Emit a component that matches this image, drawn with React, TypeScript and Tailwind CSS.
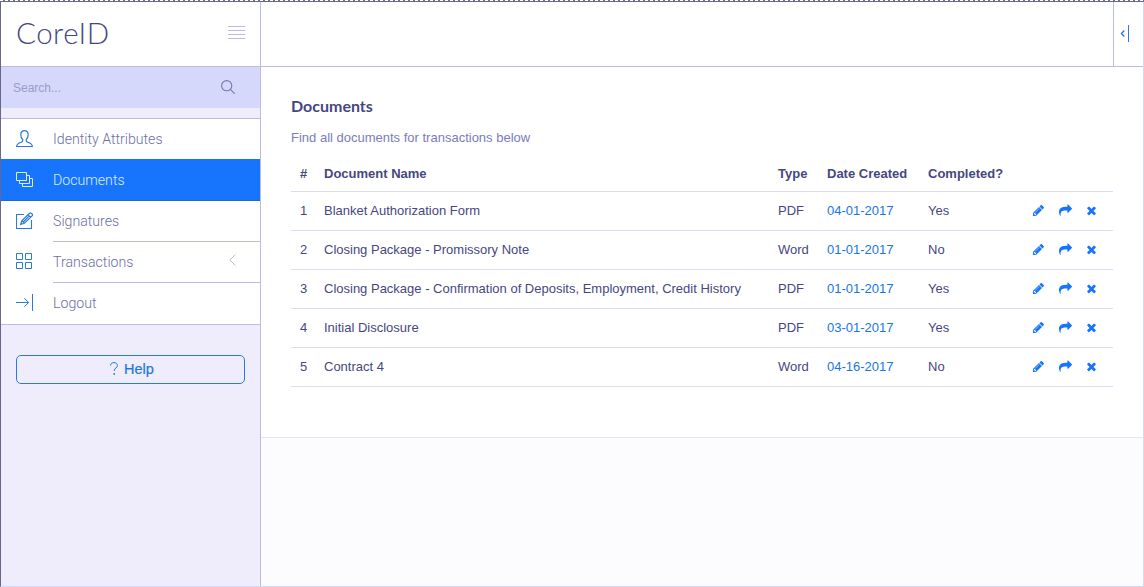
import React from "react";

type Doc = { id: number; name: string; type: string; date: string; completed: string };

const docs: Doc[] = [
  { id: 1, name: "Blanket Authorization Form", type: "PDF", date: "04-01-2017", completed: "Yes" },
  { id: 2, name: "Closing Package - Promissory Note", type: "Word", date: "01-01-2017", completed: "No" },
  { id: 3, name: "Closing Package - Confirmation of Deposits, Employment, Credit History", type: "PDF", date: "01-01-2017", completed: "Yes" },
  { id: 4, name: "Initial Disclosure", type: "PDF", date: "03-01-2017", completed: "Yes" },
  { id: 5, name: "Contract 4", type: "Word", date: "04-16-2017", completed: "No" },
];

const columns = "grid grid-cols-[33px_454px_49px_101px_104px_27px_26px_28px] items-center";

function LineIcon({ children }: { children: React.ReactNode }) {
  return (
    <svg width="18" height="18" viewBox="0 0 18 18" fill="none" stroke="currentColor" strokeWidth="1">
      {children}
    </svg>
  );
}

const UserIcon = () => (
  <LineIcon>
    <path strokeWidth="1.200" d="M8.500 .7C6.300.7 4.800 2.200 4.800 4.700c0 2 .8 3.800 1.900 4.800v1.200c0 .8-.5 1.100-1.300 1.400C2.900 12.900.9 13.400.6 16.500h15.800c-.3-3.100-2.300-3.600-4.800-4.400-.8-.3-1.300-.6-1.300-1.400V9.500c1.100-1 1.900-2.800 1.900-4.800C12.200 2.200 10.700.7 8.500.7z" />
  </LineIcon>
);
const AlbumsIcon = () => (
  <LineIcon>
    <path d="M.5 1.500h10v8H.5zM3.500 9.500v3h10v-8h-3M6.500 12.500v3h10v-8h-3" />
  </LineIcon>
);
const ComposeIcon = () => (
  <LineIcon>
    <path strokeWidth="1.100" d="M8 3.500H.5v14h15V9" />
    <path strokeWidth="1.200" d="M4.700 13.300l1.100-3.600L13.500 2.200c.5-.5 1.200-.5 1.800 0l.8.800c.6.600.6 1.200 0 1.800L8.400 12.300zM5.800 9.700l2.600 2.600M12 3.700l2.600 2.600M7.200 11l6.200-6.100" />
  </LineIcon>
);
const GridIcon = () => (
  <LineIcon>
    <path d="M.5 1.500h6v6h-6zM9.500 1.500h6v6h-6zM.5 10.500h6v6h-6zM9.500 10.500h6v6h-6z" />
  </LineIcon>
);
const LogoutIcon = () => (
  <LineIcon>
    <path d="M0 9.500h12.500M8.300 5.200l4.300 4.300-4.300 4.300M16.500 1v17" />
  </LineIcon>
);

function GlyphIcon({ d }: { d: string }) {
  return (
    <svg width="13" height="13" viewBox="0 0 1792 1792" fill="currentColor">
      <path d={d} />
    </svg>
  );
}

const PENCIL =
  "M491 1536l91-91-235-235-91 91v107h128v128h107zm523-928q0-22-22-22-10 0-17 7l-542 542q-7 7-7 17 0 22 22 22 10 0 17-7l542-542q7-7 7-17zm-54-192l416 416-832 832h-416v-416zm683 96q0 53-37 90l-166 166-416-416 166-165q36-38 90-38 53 0 91 38l235 234q37 39 37 91z";
const SHARE =
  "M1792 640q0 26-19 45l-512 512q-19 19-45 19t-45-19-19-45v-256h-224q-98 0-175.500 6t-154 21.500-133 42.500-105.500 69.500-80 101-48.500 138.500-17.500 181q0 55 5 123 0 6 2.500 23.500t2.500 26.500q0 15-8.500 25t-23.500 10q-16 0-28-17-7-9-13-22t-13.500-30-10.500-24q-127-285-127-451 0-199 53-333 162-403 875-403h224v-256q0-26 19-45t45-19 45 19l512 512q19 19 19 45z";
const CLOSE =
  "M1490 1322q0 40-28 68l-136 136q-28 28-68 28t-68-28l-294-294-294 294q-28 28-68 28t-68-28l-136-136q-28-28-28-68t28-68l294-294-294-294q-28-28-28-68t28-68l136-136q28-28 68-28t68 28l294 294 294-294q28-28 68-28t68 28l136 136q28 28 28 68t-28 68l-294 294 294 294q28 28 28 68z";

const navText = "origin-left scale-x-[0.943] text-[15px] font-light font-[Roboto,sans-serif]";

function Sidebar() {
  return (
    <aside className="flex w-[260px] shrink-0 flex-col border-r border-[#bcbce2] bg-[#efedfb]">
      <div className="flex h-[65px] items-center justify-between border-b border-[#bcbce2] bg-white pl-[15px] pr-[15px]">
        <span className="pb-0.5 font-[Lato,sans-serif] text-[29.500px] font-light leading-10 tracking-[0.500px] text-[#45467e]">CoreID</span>
        <svg width="17" height="13" viewBox="0 0 17 13" stroke="#bcbce2" className="mb-1">
          <path d="M0 .5h17M0 4.500h17M0 8.500h17M0 12.500h17" />
        </svg>
      </div>
      <div className="flex h-[41px] items-center justify-between bg-[#d5d7fb] pl-3 pr-[25px]">
        <span className="text-xs text-[#9a9ccb]">Search...</span>
        <svg width="14" height="14" viewBox="0 0 14 14" fill="none" stroke="#7778ac" strokeWidth="1.1" className="mb-px">
          <circle cx="5.700" cy="5.700" r="5.100" />
          <path d="M9.400 9.400l4.300 4.300" />
        </svg>
      </div>
      <nav className="mt-[10px] flex flex-col border-y border-[#bcbce2] bg-white text-[#6c6ea6]">
        <a className="flex h-10 items-center pl-[15px]">
          <span className="w-[37px] text-[#2b7ad9]"><UserIcon /></span>
          <span className={navText}>Identity Attributes</span>
        </a>
        <a className="flex h-[42px] items-center border-b border-[#2464cf] bg-[#1775fd] pl-[15px] text-[#dcecff]">
          <span className="w-[37px]"><AlbumsIcon /></span>
          <span className={`${navText} pt-px`}>Documents</span>
        </a>
        <a className="flex h-[41px] pl-[15px]">
          <span className="flex w-[37px] items-center pb-[3px] text-[#2b7ad9]"><ComposeIcon /></span>
          <span className="flex flex-1 items-center border-b border-[#bcbce2]"><span className={navText}>Signatures</span></span>
        </a>
        <a className="flex h-[41px] pl-[15px]">
          <span className="flex w-[37px] items-center pb-[3px] text-[#2b7ad9]"><GridIcon /></span>
          <span className="flex flex-1 items-center justify-between border-b border-[#bcbce2] pr-6">
            <span className={navText}>Transactions</span>
            <svg width="7" height="12" viewBox="0 0 7 12" fill="none" stroke="#bcbce2" className="mb-1">
              <path d="M6.500.5L.8 6l5.700 5.500" />
            </svg>
          </span>
        </a>
        <a className="flex h-[41px] items-center pl-[15px]">
          <span className="w-[37px] pb-[3px] text-[#2b7ad9]"><LogoutIcon /></span>
          <span className={navText}>Logout</span>
        </a>
      </nav>
      <button className="mx-[15px] mt-[30px] flex h-[29px] items-center justify-center gap-[6px] rounded-[5px] border border-[#2b7ad9] pl-[3px] pt-px text-[14.500px] text-[#1f75e0]">
        <svg width="8" height="13" viewBox="0 0 8 13" fill="none" stroke="currentColor" className="mb-[3px]">
          <path d="M.6 3.600C.6 1.600 2 .6 4 .6s3.400 1.100 3.400 2.900c0 2.200-3.200 2.700-3.200 5.500" />
          <circle cx="4.200" cy="11.900" r=".9" fill="currentColor" stroke="none" />
        </svg>
        <span className="[-webkit-text-stroke:0.200px_currentColor]">Help</span>
      </button>
    </aside>
  );
}

export default function App() {
  return (
    <div className="flex h-[587px] w-[1144px] flex-col overflow-hidden bg-white font-['Liberation_Sans',Arial,sans-serif] text-[#46477f]">
      <div className="h-px shrink-0 bg-[repeating-linear-gradient(90deg,#ffffff_0_3px,#6e7094_3px_5px)]" />
      <div className="flex min-h-0 flex-1 border-b border-l border-t border-b-[#d5d7fb] border-l-[#66668e] border-t-[#66668e]">
        <Sidebar />
        <main className="flex flex-1 flex-col border-r border-[#d8d8f2] bg-[#fcfcfe]">
          <header className="flex h-[65px] shrink-0 justify-end border-b border-[#bcbce2] bg-white">
            <div className="flex w-[30px] items-center border-l border-[#bcbce2] pb-px pl-[6px]">
              <svg width="9" height="17" viewBox="0 0 9 17" fill="none" stroke="#2b7ad9">
                <path strokeWidth="1.400" d="M4.300 5.500L1.500 8.500l2.800 3" />
                <path d="M8.500 0v17" />
              </svg>
            </div>
          </header>
          <section className="h-[371px] border-b border-[#e4e4f5] bg-white pl-[30px] pr-[30px] pt-[29px]">
            <h1 className="font-[Lato,sans-serif] text-base font-bold leading-5">Documents</h1>
            <p className="mt-[12px] text-[13px] leading-5 text-[#7a7cbd]">Find all documents for transactions below</p>
            <div className="mt-[10px] text-[13px]">
              <div className={`${columns} h-[34px] border-b border-[#dcdcf3] pb-px font-bold`}>
                <span className="pl-[9px]">#</span>
                <span>Document Name</span>
                <span>Type</span>
                <span>Date Created</span>
                <span>Completed?</span>
              </div>
              {docs.map((doc) => (
                <div key={doc.id} className={`${columns} h-[39px] border-b border-[#dcdcf3]`}>
                  <span className="pl-[9px]">{doc.id}</span>
                  <span className="whitespace-nowrap">{doc.name}</span>
                  <span>{doc.type}</span>
                  <span className="text-[#1775e8]">{doc.date}</span>
                  <span>{doc.completed}</span>
                  <span className="pb-px text-[#1775fd]"><GlyphIcon d={PENCIL} /></span>
                  <span className="pb-px text-[#1775fd]"><GlyphIcon d={SHARE} /></span>
                  <span className="pb-px text-[#1775fd]"><GlyphIcon d={CLOSE} /></span>
                </div>
              ))}
            </div>
          </section>
        </main>
      </div>
    </div>
  );
}
